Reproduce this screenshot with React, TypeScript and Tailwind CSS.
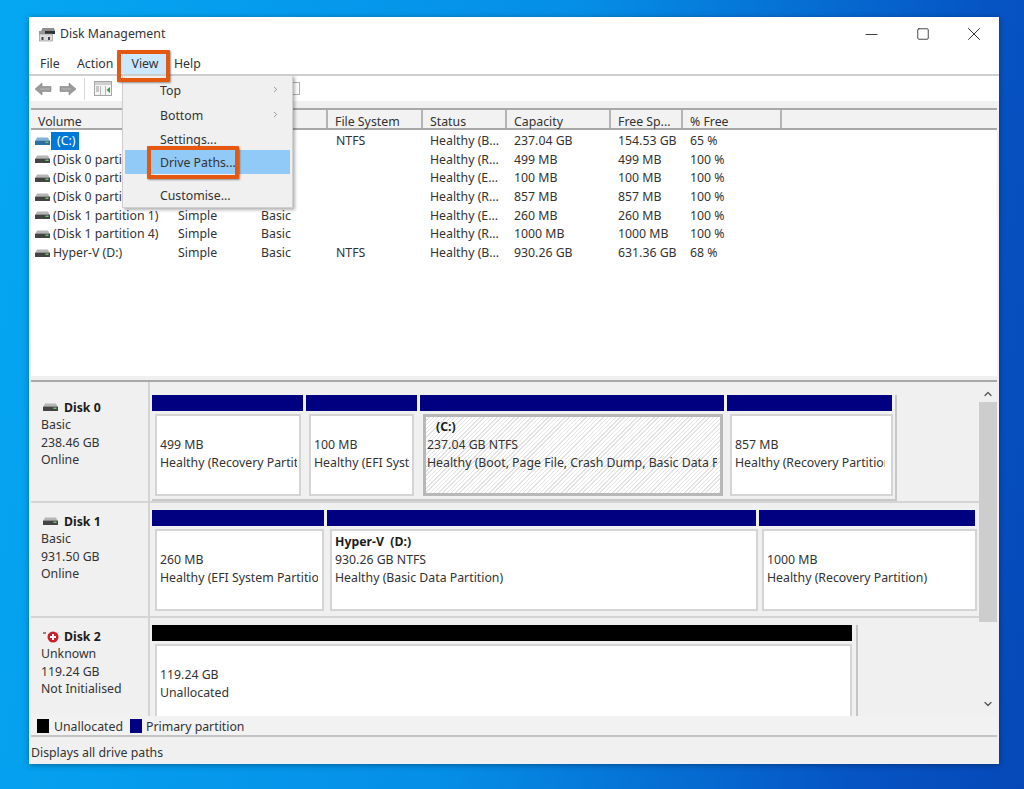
import { ChevronDown, ChevronRight, ChevronUp, Minus, Square, X } from 'lucide-react';

const font = "[font-family:'Noto_Sans',sans-serif]";

interface VolumeRow {
	name: string;
	layout: string;
	type: string;
	fs: string;
	status: string;
	capacity: string;
	free: string;
	pct: string;
}

// Layout and Type headers sit under the open menu, so they stay blank
const columns = [
	{ title: 'Volume', className: 'w-[144px]' },
	{ title: '', className: 'w-[83px]' },
	{ title: '', className: 'w-[70px]' },
	{ title: 'File System', className: 'w-[95px]' },
	{ title: 'Status', className: 'w-[84px]' },
	{ title: 'Capacity', className: 'w-[104px]' },
	{ title: 'Free Sp...', className: 'w-[72px]' },
	{ title: '% Free', className: 'w-[99px]' },
];

// the first rows run under the open menu, only the part that shows is kept
const rows: VolumeRow[] = [
	{ name: '(C:)', layout: '', type: '', fs: 'NTFS', status: 'Healthy (B...', capacity: '237.04 GB', free: '154.53 GB', pct: '65 %' },
	{ name: '(Disk 0 parti', layout: '', type: '', fs: '', status: 'Healthy (R...', capacity: '499 MB', free: '499 MB', pct: '100 %' },
	{ name: '(Disk 0 parti', layout: '', type: '', fs: '', status: 'Healthy (E...', capacity: '100 MB', free: '100 MB', pct: '100 %' },
	{ name: '(Disk 0 parti', layout: '', type: '', fs: '', status: 'Healthy (R...', capacity: '857 MB', free: '857 MB', pct: '100 %' },
	{ name: '(Disk 1 partition 1)', layout: 'Simple', type: 'Basic', fs: '', status: 'Healthy (E...', capacity: '260 MB', free: '260 MB', pct: '100 %' },
	{ name: '(Disk 1 partition 4)', layout: 'Simple', type: 'Basic', fs: '', status: 'Healthy (R...', capacity: '1000 MB', free: '1000 MB', pct: '100 %' },
	{ name: 'Hyper-V (D:)', layout: 'Simple', type: 'Basic', fs: 'NTFS', status: 'Healthy (B...', capacity: '930.26 GB', free: '631.36 GB', pct: '68 %' },
];

function DriveIcon({ blue }: { blue?: boolean }) {
	return (
		<svg width="15" height="9" viewBox="0 0 15 9" className="shrink-0">
			<path d="M2 0.5h11l1.5 3H0.5z" fill={blue ? '#7fb4d8' : '#b5b5b5'} />
			<rect x="0" y="3.5" width="15" height="4.5" rx="0.5" fill={blue ? '#2d6f9e' : '#444'} />
			<rect x="10.5" y="4.5" width="3" height="1.5" fill="#6fc16f" />
		</svg>
	);
}

function DiskManagementIcon() {
	return (
		<svg width="17" height="15" viewBox="0 0 17 15">
			<path d="M3 4l1.5-3H16l1 3z" fill="#8f8f8f" />
			<rect x="7" y="4" width="10" height="3" fill="#333" />
			<rect x="1" y="4" width="6" height="3" fill="#9a9a9a" />
			<rect x="1.5" y="7" width="13" height="7" fill="#dcdcdc" stroke="#8a8a8a" strokeWidth="0.6" />
			<rect x="3.5" y="10" width="2" height="3" fill="#444" />
			<rect x="10" y="10" width="2" height="3" fill="#444" />
		</svg>
	);
}

function ToolbarArrow({ flip }: { flip?: boolean }) {
	return (
		<svg width="18" height="14" viewBox="0 0 18 14" className={flip ? '-scale-x-100' : ''}>
			<path d="M1 7l7-6v3.5h9v5H8V13z" fill="#9a9a9a" stroke="#858585" strokeWidth="0.6" />
			<path d="M6 7h10" stroke="#b8b8b8" strokeWidth="1" />
		</svg>
	);
}

function ConsoleIcon() {
	return (
		<svg width="18" height="15" viewBox="0 0 18 15">
			<rect x="0.5" y="0.5" width="17" height="14" fill="#f4f4f4" stroke="#a5a5a5" />
			<rect x="1" y="1" width="16" height="3" fill="#d0d0d0" />
			<path d="M6.5 5v9M11.5 5v9" stroke="#b8b8b8" />
			<path d="M16 6v6l-3.5-3z" fill="#3f9b3f" />
			<path d="M2 6h3M2 8h3M2 10h3" stroke="#999" />
		</svg>
	);
}

function VolumeTable() {
	return (
		<>
			<div className="flex h-[22px] shrink-0 border-y-2 border-[#a8a8a8] bg-[#f2f2f2]">
				{columns.map((col, i) => (
					<div key={i} className={`${col.className} shrink-0 border-r-2 border-[#b4b4b4] pl-[7px] pt-[3px] leading-[17px]`}>
						{col.title}
					</div>
				))}
			</div>
			<div className="flex h-[246px] shrink-0 flex-col bg-white pt-[2px]">
				{rows.map((row, i) => (
					<div key={i} className="flex h-[18.67px] shrink-0 items-center">
						<div className="flex w-[144px] shrink-0 items-center gap-[3px] pl-[4px]">
							<DriveIcon blue={i === 0} />
							<span className={i === 0 ? '-ml-[2px] bg-[#0078d7] pl-[6px] pr-[4px] leading-[18px] text-white' : ''}>{row.name}</span>
						</div>
						<div className="w-[83px] shrink-0 pl-[3px]">{row.layout}</div>
						<div className="w-[70px] shrink-0 pl-[3px]">{row.type}</div>
						<div className="w-[95px] shrink-0 pl-[8px]">{row.fs}</div>
						<div className="w-[84px] shrink-0 pl-[7px]">{row.status}</div>
						<div className="w-[104px] shrink-0 pl-[7px]">{row.capacity}</div>
						<div className="w-[72px] shrink-0 pl-[7px]">{row.free}</div>
						<div className="w-[99px] shrink-0 pl-[7px]">{row.pct}</div>
					</div>
				))}
			</div>
		</>
	);
}

function Partition({
	width,
	title,
	indent,
	size,
	status,
	selected,
	black,
	boxClass = 'mr-[1px]',
	clipClass = 'mr-[3px]',
}: {
	width: string;
	title?: string;
	indent?: boolean;
	size: string;
	status: string;
	selected?: boolean;
	black?: boolean;
	boxClass?: string;
	clipClass?: string;
}) {
	return (
		<div className={`${width} flex shrink-0 flex-col`}>
			<div className={`h-[16px] mr-[3px] shrink-0 ${black ? 'bg-black' : 'bg-[#000080]'}`} />
			<div
				className={`mt-[3px] ml-[3px] h-[82px] shrink-0 ${boxClass} ${
					selected
						? 'border-[3px] border-[#b8b8b8] bg-[repeating-linear-gradient(135deg,#ffffff_0px,#ffffff_2px,#e4e4e4_2px,#e4e4e4_3px)] pl-[1px] pt-[1px]'
						: 'border-2 border-[#d4d4d4] bg-white pl-[3px] pt-[2px]'
				}`}
			>
				<div className={`${clipClass} overflow-hidden whitespace-nowrap`}>
					<div className={`h-[18px] whitespace-pre font-bold leading-[18px] text-[#1c1c1c] ${indent ? 'pl-[9px]' : ''}`}>{title}</div>
					<div className="h-[18px] leading-[18px]">{size}</div>
					<div className="h-[18px] leading-[18px]">{status}</div>
				</div>
			</div>
		</div>
	);
}

function DiskLabel({
	name,
	lines,
	alert,
	rowClass,
}: {
	name: string;
	lines: string[];
	alert?: boolean;
	rowClass: string;
}) {
	return (
		<div className={`${rowClass} flex w-[119px] shrink-0 flex-col border-r-2 border-b-2 border-[#d4d4d4] pl-[10px]`}>
			<div className="flex h-[17px] items-center font-bold leading-[18px] text-[#1c1c1c]">
				<div className="flex w-[23px] shrink-0 items-center pl-[2px]">
					{alert ? (
						<svg width="18" height="14" viewBox="0 0 18 14" className="-ml-[1px] shrink-0">
							<rect x="1" y="2" width="3" height="2" fill="#888" />
							<circle cx="11" cy="7" r="5.5" fill="#c8202c" />
							<path d="M11 4v6M8 7h6" stroke="#fff" strokeWidth="2" />
						</svg>
					) : (
						<DriveIcon />
					)}
				</div>
				{name}
			</div>
			{lines.map((line) => (
				<div key={line} className="h-[17.5px] leading-[17.5px]">
					{line}
				</div>
			))}
		</div>
	);
}

function DiskPane() {
	return (
		<div className="flex h-[334px] shrink-0 overflow-hidden bg-[#f0f0f0]">
			<div className="flex min-w-0 flex-1 flex-col">
				<div className="flex h-[121px] shrink-0">
					<DiskLabel rowClass="h-[121px] pt-[17px]" name="Disk 0" lines={['Basic', '238.46 GB', 'Online']} />
					<div className="flex-1 border-b-2 border-[#d4d4d4] pl-[2px] pt-[13px]">
						<div className="flex h-[106px] w-[745px] border-r-2 border-b-2 border-[#c8c8c8]">
							<Partition width="w-[154px]" size="499 MB" status="Healthy (Recovery Partition)" boxClass="mr-[5px]" clipClass="mr-[2px]" />
							<Partition width="w-[114px]" size="100 MB" status="Healthy (EFI System)" boxClass="mr-[6px]" clipClass="mr-[2px]" />
							<Partition width="w-[307px]" title="(C:)" indent size="237.04 GB NTFS" status="Healthy (Boot, Page File, Crash Dump, Basic Data Partition)" selected boxClass="mr-[4px]" />
							<Partition width="w-[168px]" size="857 MB" status="Healthy (Recovery Partition)" boxClass="mr-[2px]" clipClass="mr-[6px]" />
						</div>
					</div>
				</div>
				<div className="flex h-[115px] shrink-0">
					<DiskLabel rowClass="h-[115px] pt-[10px]" name="Disk 1" lines={['Basic', '931.50 GB', 'Online']} />
					<div className="flex-1 border-b-2 border-[#d4d4d4] pl-[2px] pt-[7px]">
						<div className="flex h-[104px]">
							<Partition width="w-[175px]" size="260 MB" status="Healthy (EFI System Partition)" boxClass="mr-[3px]" clipClass="mr-[4px]" />
							<Partition width="w-[432px]" title="Hyper-V  (D:)" size="930.26 GB NTFS" status="Healthy (Basic Data Partition)" />
							<Partition width="w-[219px]" size="1000 MB" status="Healthy (Recovery Partition)" />
						</div>
					</div>
				</div>
				<div className="flex h-[115px] shrink-0">
					<DiskLabel rowClass="h-[115px] pt-[10px]" name="Disk 2" lines={['Unknown', '119.24 GB', 'Not Initialised']} alert />
					<div className="flex-1 pl-[2px] pt-[7px]">
						<div className="flex h-[104px] w-[706px] border-r-2 border-[#c4c4c4]">
							<Partition width="w-[703px]" size="119.24 GB" status="Unallocated" black boxClass="mr-[3px]" />
						</div>
					</div>
				</div>
			</div>
			<div className="flex w-[18px] shrink-0 flex-col items-center">
				<ChevronUp size={12} strokeWidth={2.5} className="mt-[5px] h-[14px] shrink-0 text-[#555]" />
				<div className="mt-[1px] h-[220px] w-full shrink-0 bg-[#cdcdcd]" />
				<div className="flex-1" />
				<ChevronDown size={12} strokeWidth={2.5} className="mb-[5px] h-[14px] shrink-0 text-[#555]" />
			</div>
		</div>
	);
}

function ViewMenu() {
	const items = [
		{ label: 'Top', className: 'h-[24px]', arrow: true },
		{ label: 'Bottom', className: 'h-[25px]', arrow: true },
		{ label: 'Settings...', className: 'h-[23px]' },
		{ label: 'Drive Paths...', className: 'h-[24px] bg-[#91c9f7]' },
		{ label: 'Customise...', className: 'mt-[9px] h-[24px]' },
	];
	return (
		<div className="absolute left-[93px] top-[58px] h-[133px] w-[171px] border border-[#cfcfcf] bg-[#f0f0f0] px-[2px] pt-[2px] shadow-[2px_2px_3px_rgba(0,0,0,0.3)]">
			{items.map((item) => (
				<div key={item.label} className={`${item.className} flex items-center justify-between pl-[35px] pr-[10px] pt-[2px] leading-[18px]`}>
					<span>{item.label}</span>
					{item.arrow && <ChevronRight size={9} strokeWidth={2} className="mb-[3px] text-[#777]" />}
				</div>
			))}
		</div>
	);
}

export default function App() {
	return (
		<div className="h-[789px] w-[1024px] overflow-hidden bg-[linear-gradient(100deg,#05a7f2_0%,#058ee6_50%,#0654c4_85%,#0648b8_100%)] pl-[29px] pt-[17px]">
			<div className={`${font} relative flex h-[747px] w-[970px] flex-col bg-[#f0f0f0] text-[12.3px] text-[#333] shadow-[0_1px_6px_rgba(0,0,0,0.35)]`}>
				{/* title bar */}
				<div className="flex h-[33px] shrink-0 items-center bg-white pl-[9px] pt-[1px]">
					<DiskManagementIcon />
					<span className="ml-[5px] flex-1">Disk Management</span>
					<div className="flex w-[51px] justify-center"><Minus size={19} strokeWidth={1.1} className="text-[#222]" /></div>
					<div className="flex w-[51px] justify-center"><Square size={14} strokeWidth={1.4} className="text-[#222]" /></div>
					<div className="flex w-[51px] justify-center"><X size={22} strokeWidth={1} className="text-[#222]" /></div>
				</div>
				{/* menu */}
				<div className="flex h-[26px] shrink-0 items-stretch border-b-2 border-[#cfcfcf] bg-white pl-[11px]">
					<span className="w-[37px] pt-[5px]">File</span>
					<span className="w-[45px] pt-[5px]">Action</span>
					<span className="mt-[2px] w-[46px] bg-[#cce8ff] pt-[3px] text-center">View</span>
					<span className="ml-[6px] pt-[5px]">Help</span>
				</div>
				{/* toolbar */}
				<div className="flex h-[25px] shrink-0 items-center gap-[7px] bg-white pl-[5px]">
					<ToolbarArrow />
					<ToolbarArrow flip />
					<div className="h-[22px] w-px bg-[#d8d8d8]" />
					<div className="ml-[2px]"><ConsoleIcon /></div>
					<div className="ml-[169px] h-[13px] w-[12px] border border-[#b0b0b0]" />
				</div>
				<div className="h-[7px] shrink-0" />
				<div className="mx-[2px] flex min-h-0 flex-1 flex-col">
					<VolumeTable />
					<div className="h-[6px] shrink-0 border-b-2 border-[#a8a8a8] bg-[#f0f0f0]" />
					<DiskPane />
					<div className="flex h-[21px] shrink-0 items-center border-b-2 border-[#c4c4c4] bg-[#f2f2f2] pl-[6px] pt-[1px]">
						<div className="h-[14px] w-[12px] bg-black" />
						<span className="ml-[5px] pt-[2px]">Unallocated</span>
						<div className="ml-[7px] h-[14px] w-[12px] bg-[#000080]" />
						<span className="ml-[4px] pt-[2px]">Primary partition</span>
					</div>
					<div className="flex flex-1 items-center pt-[5px]">Displays all drive paths</div>
				</div>

				{/* open View menu and the screenshot's orange call-outs */}
				<ViewMenu />
				<div className="absolute left-[88px] top-[33px] h-[32px] w-[53px] rounded-[1px] border-[4px] border-[#e4590f] shadow-[1px_1px_2px_rgba(0,0,0,0.4)]" />
				<div className="absolute left-[118px] top-[129px] h-[33px] w-[92px] rounded-[1px] border-[4px] border-[#e4590f] shadow-[1px_1px_2px_rgba(0,0,0,0.4)]" />
			</div>
		</div>
	);
}
